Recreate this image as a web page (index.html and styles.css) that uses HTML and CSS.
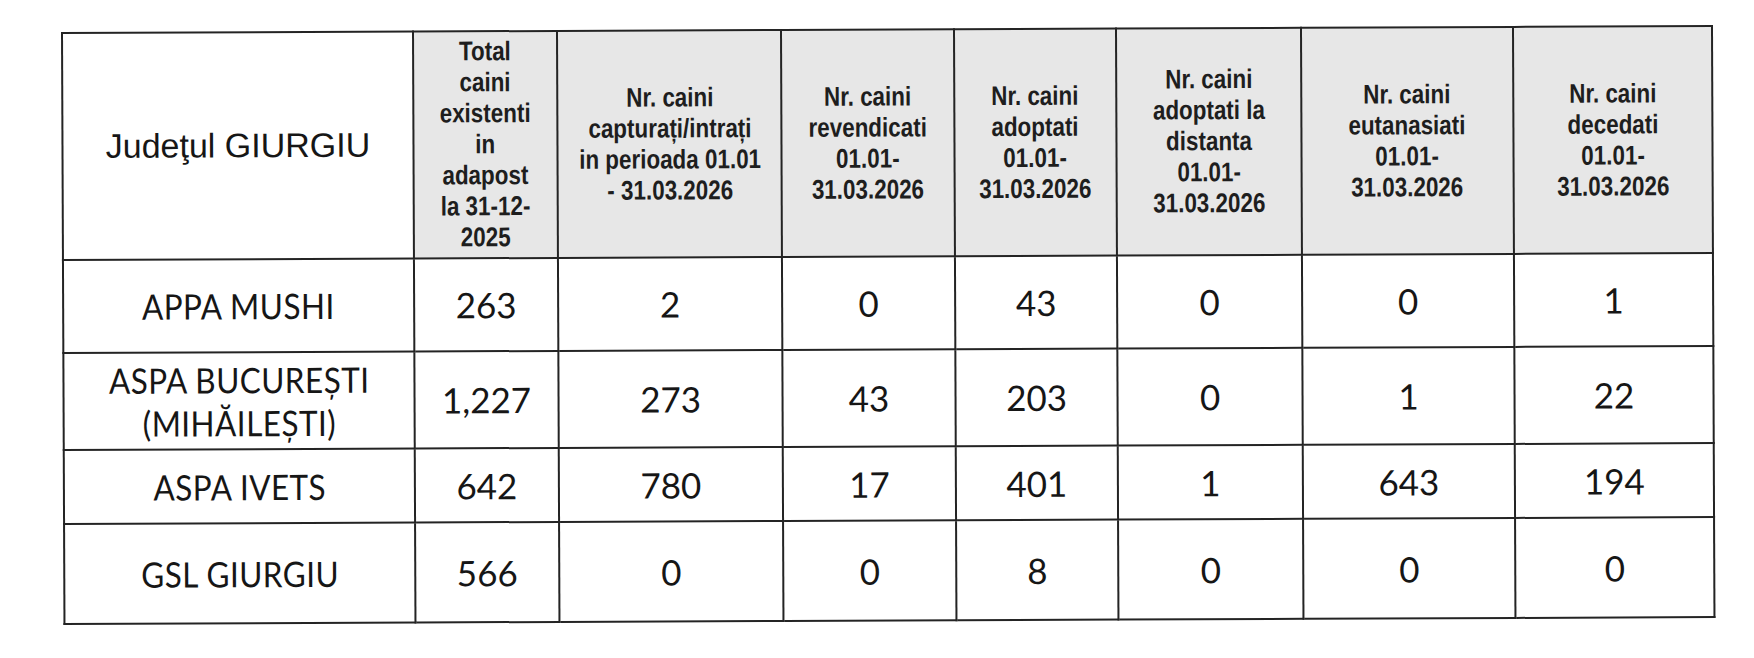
FILE: index.html
```html
<!DOCTYPE html>
<html lang="ro">
<head>
<meta charset="utf-8">
<title>Situația câinilor – Județul Giurgiu</title>
<link rel="stylesheet" href="styles.css">
</head>
<body>
<main class="page">
  <table class="report">
    <colgroup>
      <col class="c-name">
      <col class="c-total">
      <col class="c-capt">
      <col class="c-rev">
      <col class="c-adopt">
      <col class="c-dist">
      <col class="c-eut">
      <col class="c-dec">
    </colgroup>
    <thead>
      <tr class="row-head">
        <th class="county">Judeţul GIURGIU</th>
        <th class="metric"><span class="squeeze">Total<br>caini<br>existenti<br>in<br>adapost<br>la 31-12-<br>2025</span></th>
        <th class="metric"><span class="squeeze">Nr. caini<br>capturați/intrați<br>in perioada 01.01<br>- 31.03.2026</span></th>
        <th class="metric"><span class="squeeze">Nr. caini<br>revendicati<br>01.01-<br>31.03.2026</span></th>
        <th class="metric"><span class="squeeze">Nr. caini<br>adoptati<br>01.01-<br>31.03.2026</span></th>
        <th class="metric"><span class="squeeze">Nr. caini<br>adoptati la<br>distanta<br>01.01-<br>31.03.2026</span></th>
        <th class="metric"><span class="squeeze">Nr. caini<br>eutanasiati<br>01.01-<br>31.03.2026</span></th>
        <th class="metric"><span class="squeeze">Nr. caini<br>decedati<br>01.01-<br>31.03.2026</span></th>
      </tr>
    </thead>
    <tbody>
      <tr class="row-1">
        <td class="name"><span class="narrow">APPA MUSHI</span></td>
        <td class="num">263</td>
        <td class="num">2</td>
        <td class="num">0</td>
        <td class="num">43</td>
        <td class="num">0</td>
        <td class="num">0</td>
        <td class="num">1</td>
      </tr>
      <tr class="row-2">
        <td class="name"><span class="narrow">ASPA BUCUREȘTI<br>(MIHĂILEȘTI)</span></td>
        <td class="num">1,227</td>
        <td class="num">273</td>
        <td class="num">43</td>
        <td class="num">203</td>
        <td class="num">0</td>
        <td class="num">1</td>
        <td class="num">22</td>
      </tr>
      <tr class="row-3">
        <td class="name"><span class="narrow">ASPA IVETS</span></td>
        <td class="num">642</td>
        <td class="num">780</td>
        <td class="num">17</td>
        <td class="num">401</td>
        <td class="num">1</td>
        <td class="num">643</td>
        <td class="num">194</td>
      </tr>
      <tr class="row-4">
        <td class="name"><span class="narrow">GSL GIURGIU</span></td>
        <td class="num">566</td>
        <td class="num">0</td>
        <td class="num">0</td>
        <td class="num">8</td>
        <td class="num">0</td>
        <td class="num">0</td>
        <td class="num">0</td>
      </tr>
    </tbody>
  </table>
</main>
</body>
</html>
```

FILE: styles.css
```css
* {
  box-sizing: border-box;
}

html,
body {
  margin: 0;
  background: #ffffff;
}

body {
  width: 1754px;
  height: 658px;
  overflow: hidden;
}

.page {
  padding: 32px 0 0 61px;
}

.report {
  border-collapse: collapse;
  table-layout: fixed;
  width: 1650px;
  color: #161616;
  transform: rotate(-0.24deg);
  transform-origin: 0 0;
}

.c-name { width: 351px; }
.c-total { width: 144px; }
.c-capt { width: 224px; }
.c-rev { width: 173px; }
.c-adopt { width: 162px; }
.c-dist { width: 185px; }
.c-eut { width: 212px; }
.c-dec { width: 199px; }

.report th,
.report td {
  border: 2px solid #242424;
  text-align: center;
  vertical-align: middle;
  padding: 0 2px;
}

.row-head th {
  height: 227px;
}

.county {
  font-family: "Liberation Sans", Arial, sans-serif;
  font-weight: 400;
  font-size: 34px;
  background: #ffffff;
}

.metric {
  font-family: "Liberation Sans", Arial, sans-serif;
  font-weight: 700;
  font-size: 27px;
  line-height: 31px;
  color: #1e1e1e;
  background: #e7e7e7;
}

.squeeze {
  display: inline-block;
  white-space: nowrap;
  transform: scaleX(0.83);
}

.name,
.num {
  font-family: Lato, "Noto Sans", sans-serif;
  font-weight: 400;
  font-size: 35px;
  line-height: 43px;
}

.narrow {
  display: inline-block;
  white-space: nowrap;
  letter-spacing: 0.5px;
  transform: scaleX(0.9);
}

.row-1 td { height: 93px; }
.row-2 td { height: 97px; }
.row-3 td { height: 74px; }
.row-4 td { height: 100px; }
```
